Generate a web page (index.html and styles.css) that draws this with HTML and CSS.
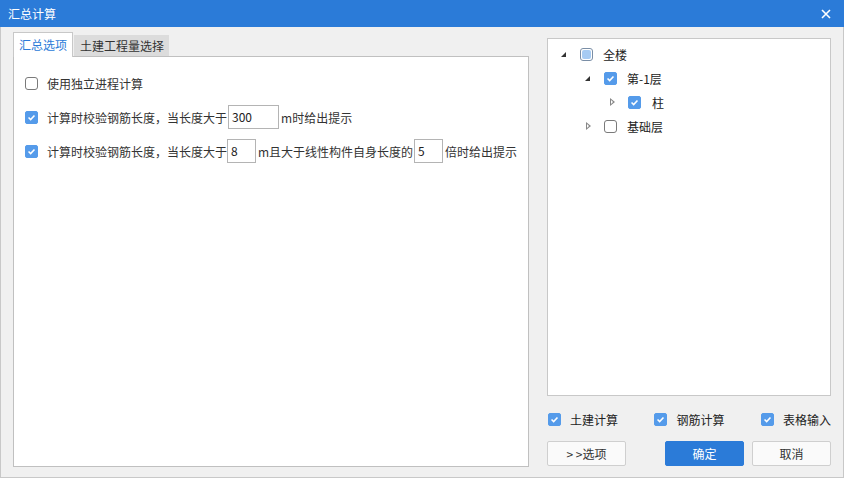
FILE: index.html
```html
<!DOCTYPE html>
<html lang="zh-CN">
<head>
<meta charset="utf-8">
<title>汇总计算</title>
<link rel="stylesheet" href="styles.css">
</head>
<body>
<div class="dialog">
  <div class="titlebar">
    <span class="title">汇总计算</span>
    <svg class="close" width="10" height="10" viewBox="0 0 10 10"><path d="M1 1L9 9M9 1L1 9" stroke="#fff" stroke-width="1.6"/></svg>
  </div>
  <div class="main">
    <div class="leftcol">
      <div class="tabs">
        <div class="tab active">汇总选项</div>
        <div class="tab">土建工程量选择</div>
      </div>
      <div class="panel">
        <div class="row">
          <span class="cb"></span>
          <span class="label">使用独立进程计算</span>
        </div>
        <div class="row">
          <span class="cb checked"><svg viewBox="0 0 13 13"><polyline points="3,6.5 5.5,9 10,4" fill="none" stroke="#fff" stroke-width="1.8"/></svg></span>
          <span class="label">计算时校验钢筋长度，当长度大于</span>
          <span class="input w50">300</span>
          <span class="label tight">m时给出提示</span>
        </div>
        <div class="row">
          <span class="cb checked"><svg viewBox="0 0 13 13"><polyline points="3,6.5 5.5,9 10,4" fill="none" stroke="#fff" stroke-width="1.8"/></svg></span>
          <span class="label">计算时校验钢筋长度，当长度大于</span>
          <span class="input w30">8</span>
          <span class="label tight2">m且大于线性构件自身长度的</span>
          <span class="input w30">5</span>
          <span class="label tight">倍时给出提示</span>
        </div>
      </div>
    </div>
    <div class="rightcol">
      <div class="tree">
        <div class="node lvl0">
          <span class="tri open"></span>
          <span class="cb partial"><span class="fill"></span></span>
          <span class="nlabel">全楼</span>
        </div>
        <div class="node lvl1">
          <span class="tri open"></span>
          <span class="cb checked"><svg viewBox="0 0 13 13"><polyline points="3,6.5 5.5,9 10,4" fill="none" stroke="#fff" stroke-width="1.8"/></svg></span>
          <span class="nlabel">第-1层</span>
        </div>
        <div class="node lvl2">
          <span class="tri closed"></span>
          <span class="cb checked"><svg viewBox="0 0 13 13"><polyline points="3,6.5 5.5,9 10,4" fill="none" stroke="#fff" stroke-width="1.8"/></svg></span>
          <span class="nlabel pad">柱</span>
        </div>
        <div class="node lvl1">
          <span class="tri closed"></span>
          <span class="cb"></span>
          <span class="nlabel">基础层</span>
        </div>
      </div>
      <div class="checks">
        <div class="check">
          <span class="cb checked"><svg viewBox="0 0 13 13"><polyline points="3,6.5 5.5,9 10,4" fill="none" stroke="#fff" stroke-width="1.8"/></svg></span>
          <span class="clabel">土建计算</span>
        </div>
        <div class="check">
          <span class="cb checked"><svg viewBox="0 0 13 13"><polyline points="3,6.5 5.5,9 10,4" fill="none" stroke="#fff" stroke-width="1.8"/></svg></span>
          <span class="clabel">钢筋计算</span>
        </div>
        <div class="check">
          <span class="cb checked"><svg viewBox="0 0 13 13"><polyline points="3,6.5 5.5,9 10,4" fill="none" stroke="#fff" stroke-width="1.8"/></svg></span>
          <span class="clabel">表格输入</span>
        </div>
      </div>
      <div class="buttons">
        <button class="btn">&gt; &gt;选项</button>
        <button class="btn primary">确定</button>
        <button class="btn">取消</button>
      </div>
    </div>
  </div>
</div>
</body>
</html>
```
FILE: styles.css
```css
* { box-sizing: border-box; }
html, body { margin: 0; padding: 0; }
body {
  width: 844px;
  height: 478px;
  overflow: hidden;
  font-family: "Noto Sans CJK SC", "Noto Sans", sans-serif;
  font-size: 12px;
  color: #333;
  background: #f0f0f0;
}
.dialog {
  width: 844px;
  height: 478px;
  display: flex;
  flex-direction: column;
  background: #f0f0f0;
  border: 1px solid #c8c8c8;
  border-top: none;
}
.titlebar {
  height: 27px;
  flex: none;
  background: #2b7bd8;
  display: flex;
  align-items: center;
  justify-content: space-between;
  padding: 0 13px 0 8px;
  margin: 0 -1px;
}
.title {
  color: #fff;
  font-size: 12px;
  line-height: 1;
}
.close { display: block; }
.main {
  flex: 1;
  display: flex;
  gap: 18px;
  padding: 0 12px;
}
.leftcol {
  width: 516px;
  display: flex;
  flex-direction: column;
  padding: 5px 0 11px;
}
.tabs {
  display: flex;
  align-items: flex-end;
  height: 25px;
  position: relative;
  z-index: 1;
  margin-bottom: -1px;
}
.tab {
  height: 21px;
  line-height: 20px;
  padding: 0 4px 0 5px;
  background: #dcdcdc;
  color: #333;
  border: 1px solid #dcdcdc;
  border-bottom: none;
  margin-left: 1px;
  margin-bottom: 1px;
}
.tab.active {
  height: 25px;
  line-height: 23px;
  background: #fff;
  color: #2b7bd8;
  border-color: #c8c8c8;
  margin-left: 0;
  margin-bottom: 0;
  width: 60px;
  padding: 0 0 0 5px;
}
.panel {
  flex: 1;
  background: #fff;
  border: 1px solid #c0c0c0;
  padding: 14px 11px;
  display: flex;
  flex-direction: column;
  gap: 10px;
}
.row {
  display: flex;
  align-items: center;
  height: 24px;
}
.cb {
  width: 13px;
  height: 13px;
  flex: none;
  border: 1px solid #7a7a7a;
  border-radius: 3px;
  background: #fff;
  display: inline-flex;
  align-items: center;
  justify-content: center;
}
.cb svg { width: 13px; height: 13px; display: block; }
.cb.checked {
  background: #559bea;
  border-color: #559bea;
  border-radius: 2px;
}
.cb.partial {
  border-color: #7a8ea6;
  padding: 1px;
}
.cb.partial .fill {
  width: 9px;
  height: 9px;
  background: #a6cbf3;
  border-radius: 2px;
}
.row .cb { margin-right: 9px; }
.label { white-space: nowrap; }
.label.tight { margin-left: 2px; }
.label.tight2 { margin-left: 2px; margin-right: 1px; }
.input {
  height: 24px;
  line-height: 22px;
  border: 1px solid #b4b4b4;
  background: #fff;
  padding-left: 3px;
  color: #222;
}
.input.w50 { width: 51px; margin-left: 1px; }
.input.w30 { width: 30px; }
.rightcol {
  width: 285px;
  display: flex;
  flex-direction: column;
  padding: 11px 0 12px;
}
.tree {
  height: 358px;
  flex: none;
  background: #fff;
  border: 1px solid #c8c8c8;
  padding-top: 3px;
}
.node {
  height: 24px;
  display: flex;
  align-items: center;
  padding-left: 8px;
}
.node.lvl1 { padding-left: 32px; }
.node.lvl2 { padding-left: 56px; }
.tri {
  width: 16px;
  height: 16px;
  margin-right: 8px;
  position: relative;
  flex: none;
}
.tri.open::after {
  content: "";
  position: absolute;
  left: 5px;
  top: 6px;
  width: 0;
  height: 0;
  border-left: 5px solid transparent;
  border-bottom: 5px solid #333;
}
.tri.closed::after {
  content: "";
  position: absolute;
  left: 6px;
  top: 4px;
  width: 0;
  height: 0;
  border-top: 4px solid transparent;
  border-bottom: 4px solid transparent;
  border-left: 5px solid #888;
}
.tri.closed::before {
  content: "";
  position: absolute;
  left: 7px;
  top: 6px;
  width: 0;
  height: 0;
  border-top: 2px solid transparent;
  border-bottom: 2px solid transparent;
  border-left: 2.5px solid #fff;
  z-index: 1;
}
.nlabel { margin-left: 10px; color: #222; }
.nlabel.pad { margin-left: 11px; }
.checks {
  margin-top: 13px;
  height: 20px;
  display: flex;
  align-items: center;
  justify-content: space-between;
  padding-left: 1px;
}
.check {
  display: flex;
  align-items: center;
}
.check .cb { margin-right: 9px; }
.clabel { color: #222; }
.buttons {
  margin-top: 12px;
  display: flex;
  gap: 8px;
}
.btn {
  width: 79px;
  height: 25px;
  font-family: inherit;
  font-size: 12px;
  color: #333;
  background: #fafafa;
  border: 1px solid #cfcfcf;
  border-radius: 2px;
  padding: 0;
}
.btn.primary {
  margin-left: auto;
  background: #2b7bd8;
  border-color: #2b7bd8;
  color: #fff;
}
```
